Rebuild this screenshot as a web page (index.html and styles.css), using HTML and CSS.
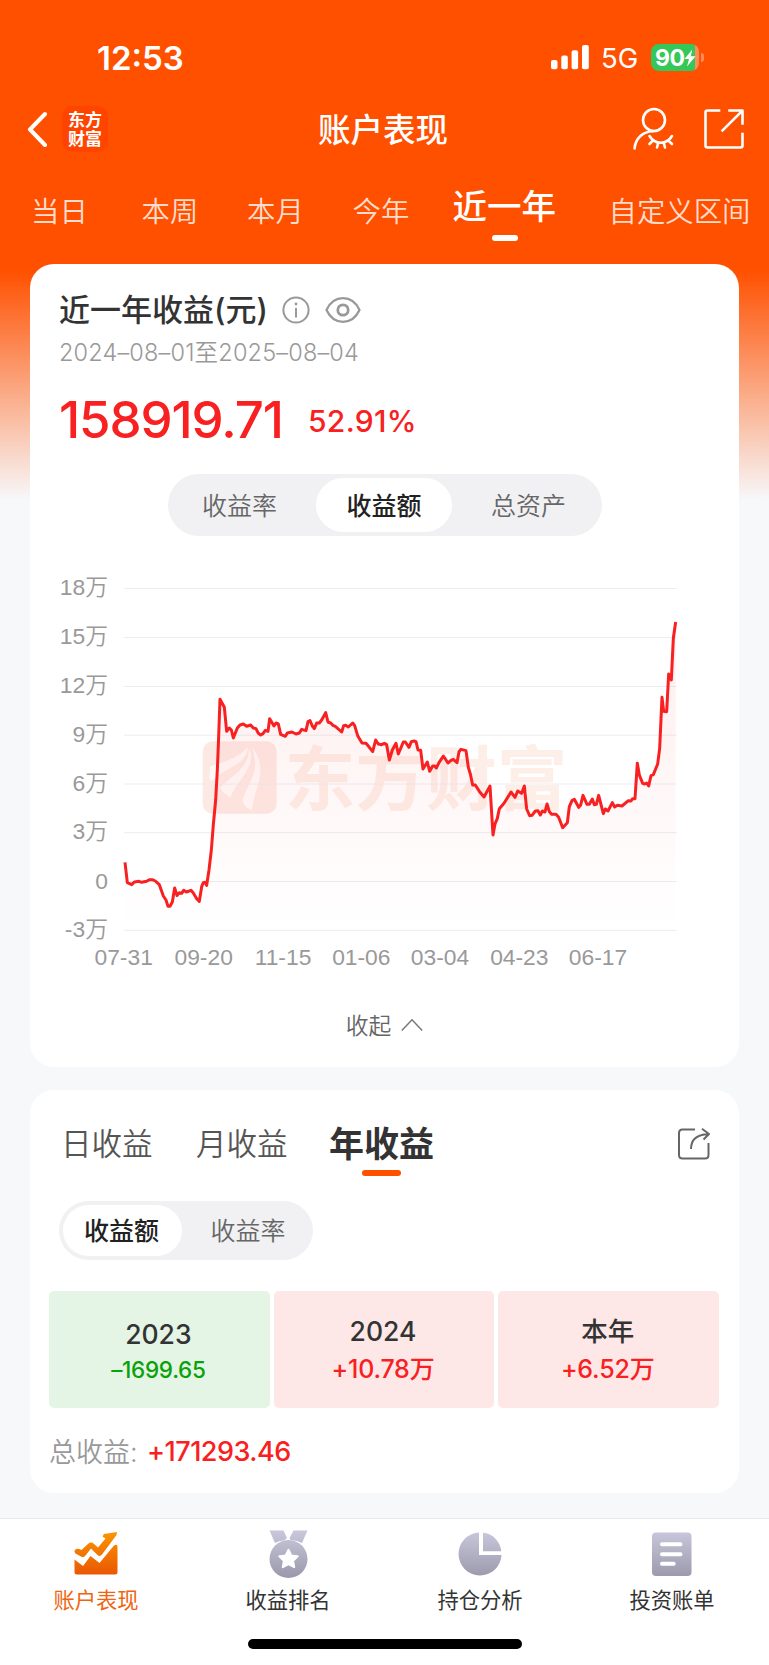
FILE: index.html
```html
<!DOCTYPE html>
<html lang="zh-CN">
<head>
    <meta charset="UTF-8">
    <meta name="viewport" content="width=device-width, initial-scale=1.0">
    <title>账户表现</title>
    <link rel="stylesheet" href="styles.css">
</head>
<body>

<div class="page">
    <!-- 状态栏 -->
    <div class="status-bar">
        <span class="time">12:53</span>
        <svg class="signal" width="38" height="25" viewBox="0 0 38 25" fill="#fff">
            <rect x="0" y="15" width="6.5" height="9.3" rx="2"/>
            <rect x="10.3" y="10.5" width="6.5" height="13.8" rx="2"/>
            <rect x="20.6" y="5.3" width="6.5" height="19" rx="2"/>
            <rect x="31" y="0" width="6.8" height="24.3" rx="2"/>
        </svg>
        <span class="network">5G</span>
        <div class="battery">
            <span class="battery-num">90</span>
            <svg class="bolt" width="12" height="18" viewBox="0 0 12 18" fill="#fff"><path d="M8.3 0.5 L0.5 10 H5 L3 17.5 L11.5 7.2 H6.8 Z"/></svg>
        </div>
        <div class="battery-cap"></div>
    </div>

    <!-- 标题栏 -->
    <div class="nav-bar">
        <svg class="back" width="21" height="36" viewBox="0 0 21 36" fill="none" stroke="#fff" stroke-width="4" stroke-linecap="round" stroke-linejoin="round"><path d="M18 3 L3 18.500 L18 34"/></svg>
        <div class="logo"><span>东方</span><span>财富</span></div>
        <h1 class="title">账户表现</h1>
        <svg class="icon-user" width="42" height="44" viewBox="0 0 42 44" fill="none" stroke="#fff" stroke-width="2.6" stroke-linecap="round">
            <circle cx="21" cy="13" r="11"/>
            <path d="M20 24.2 C9.500 24.5 2.500 31.500 1.500 41.500"/>
            <path d="M16.500 29 C22 38 33.500 38 39 29"/>
            <path d="M19.500 34 L16.500 37 M25.200 36.200 L24 40.500 M30.800 36.200 L32 40.500 M35.700 34 L39 37"/>
        </svg>
        <svg class="icon-open" width="40" height="40" viewBox="0 0 40 40" fill="none" stroke="#fff" stroke-width="2.6" stroke-linecap="square" stroke-linejoin="round">
            <path d="M15 1.500 H3.500 Q1.500 1.500 1.500 3.500 V36.500 Q1.500 38.500 3.500 38.500 H36.500 Q38.500 38.500 38.500 36.500 V25"/>
            <path d="M25.500 1.500 H38.500 V14.500 M38 2 L18.500 21.500"/>
        </svg>
    </div>

    <!-- 时间区间 -->
    <div class="range-tabs">
        <span>当日</span>
        <span>本周</span>
        <span>本月</span>
        <span>今年</span>
        <span class="active">近一年</span>
        <span>自定义区间</span>
    </div>

    <!-- 收益走势 -->
    <div class="card profit-card">
        <div class="profit-head">
            <h2>近一年收益(元)</h2>
            <svg class="icon-info" width="28" height="28" viewBox="0 0 28 28" fill="none" stroke="#999" stroke-width="2">
                <circle cx="14" cy="14" r="12.6"/>
                <path d="M14 12 V21.500"/>
                <circle cx="14" cy="8" r="1.400" fill="#999" stroke="none"/>
            </svg>
            <svg class="icon-eye" width="36" height="28" viewBox="0 0 36 28" fill="none" stroke="#999" stroke-width="2.300" stroke-linejoin="round">
                <path d="M1.500 14 C5 6.500 11 2.200 18 2.200 C25 2.200 31 6.500 34.500 14 C31 21.500 25 25.800 18 25.800 C11 25.800 5 21.500 1.500 14 Z"/>
                <circle cx="18" cy="14" r="5.200" stroke-width="2.800"/>
            </svg>
        </div>
        <div class="date-range">2024–08–01至2025–08–04</div>
        <div class="profit-value">
            <span class="amount">158919.71</span>
            <span class="rate">52.91%</span>
        </div>

        <div class="segment segment-three">
            <span>收益率</span>
            <span class="active">收益额</span>
            <span>总资产</span>
        </div>

        <svg class="chart" width="660" height="410" viewBox="0 0 1980 1230">
            <defs>
                <linearGradient id="area" x1="0" y1="156" x2="0" y2="1080" gradientUnits="userSpaceOnUse">
                    <stop offset="0" stop-color="#f82020" stop-opacity="0.08"/>
                    <stop offset="1" stop-color="#f82020" stop-opacity="0"/>
                </linearGradient>
            </defs>
            <!-- 水印 -->
            <g class="watermark">
                <rect x="488" y="514" width="222" height="217" rx="30"/>
                <path class="watermark-cut" d="M510 590 C555 575 600 560 624 530 C620 585 560 590 527 625 C515 635 508 632 508 620 Z"/>
                <path class="watermark-cut" d="M627 532 C650 590 600 620 570 683 C555 672 545 662 540 655 C565 620 630 600 627 532 Z"/>
                <path class="watermark-cut" d="M636 532 C690 600 640 660 636 720 C620 715 610 705 608 690 C620 640 665 610 636 532 Z"/>
                <text x="734" y="704" textLength="848">东方财富</text>
            </g>
            <g class="grid">
                <path d="M252 55.500 H1910 M252 202.500 H1910 M252 349.500 H1910 M252 495.500 H1910 M252 642 H1910 M252 788 H1910 M252 934.500 H1910 M252 1081 H1910"/>
            </g>
            <path id="fill" fill="url(#area)"/>
            <polyline id="line" class="line" points="255,877 262,938 275,944 283,936 297,934 305,937 320,934 328,929 337,929 346,933 358,944 370,978 378,990 384,1009 390,1009 397,996 404,954 411,977 418,968 425,970 431,961 439,966 453,961 460,969 470,986 478,994 485,950 490,938 495,937 500,946 507,900 514,840 520,764 527,690 532,600 536,500 540,388 553,412 560,484 568,474 574,480 580,504 592,474 600,465 610,462 620,469 632,465 640,474 648,476 655,490 662,495 669,491 676,481 684,484 689,446 702,468 708,459 715,462 722,493 736,499 742,489 756,486 768,492 778,489 785,478 798,482 804,455 810,452 817,468 823,476 830,459 838,459 845,450 857,428 864,456 872,459 880,467 886,469 905,486 911,467 917,466 925,471 938,459 944,467 953,497 966,519 978,520 988,532 998,545 1007,510 1015,522 1025,524 1033,520 1040,524 1048,570 1057,540 1068,520 1075,552 1090,516 1096,516 1107,532 1114,515 1122,513 1128,515 1134,540 1142,541 1149,597 1162,576 1169,604 1178,588 1184,588 1189,594 1197,578 1210,558 1224,579 1232,572 1240,568 1251,578 1257,545 1263,538 1278,542 1285,592 1291,612 1298,645 1306,645 1320,667 1332,681 1350,648 1359,795 1365,762 1372,745 1378,716 1392,700 1413,666 1425,682 1433,663 1445,670 1453,648 1460,717 1469,737 1476,736 1486,723 1494,722 1501,735 1507,723 1515,726 1521,702 1528,725 1535,733 1548,733 1556,742 1568,773 1582,758 1588,710 1596,692 1603,688 1616,712 1622,705 1629,676 1641,703 1648,703 1657,687 1663,704 1669,703 1676,676 1690,731 1696,717 1704,723 1717,698 1724,711 1732,706 1746,708 1765,692 1773,693 1778,686 1785,686 1792,580 1798,615 1808,640 1814,642 1820,639 1826,648 1833,617 1840,614 1853,582 1859,535 1866,382 1871,424 1880,425 1886,312 1894,330 1900,205 1907,156"/>
            <g class="axis-y">
                <text x="204" y="75">18万</text>
                <text x="204" y="222">15万</text>
                <text x="204" y="368">12万</text>
                <text x="204" y="515">9万</text>
                <text x="204" y="662">6万</text>
                <text x="204" y="808">3万</text>
                <text x="204" y="956">0</text>
                <text x="204" y="1102">-3万</text>
            </g>
            <g class="axis-x">
                <text x="251" y="1186">07-31</text>
                <text x="491" y="1186">09-20</text>
                <text x="729" y="1186">11-15</text>
                <text x="964" y="1186">01-06</text>
                <text x="1200" y="1186">03-04</text>
                <text x="1438" y="1186">04-23</text>
                <text x="1674" y="1186">06-17</text>
            </g>
        </svg>

        <div class="collapse">
            <span>收起</span>
            <svg width="22" height="14" viewBox="0 0 22 14" fill="none" stroke="#777" stroke-width="1.500"><path d="M0.800 12.500 L11 1.800 L21.200 12.500"/></svg>
        </div>
    </div>

    <!-- 收益日历 -->
    <div class="card calendar-card">
        <div class="period-tabs">
            <span>日收益</span>
            <span>月收益</span>
            <span class="active">年收益</span>
            <svg class="icon-share" width="34" height="34" viewBox="0 0 34 34" fill="none" stroke="#666" stroke-width="2" stroke-linejoin="round">
                <path d="M18 2.500 H5.500 Q2 2.500 2 6 V28 Q2 31.500 5.500 31.500 H28 Q31.500 31.500 31.500 28 V16"/>
                <path d="M14 22 C14 12.500 19.500 7.500 31 7.200 M25 1.800 L32 7 L26.500 12.500"/>
            </svg>
        </div>

        <div class="segment segment-two">
            <span class="active">收益额</span>
            <span>收益率</span>
        </div>

        <div class="years">
            <div class="year loss">
                <b>2023</b>
                <i>–1699.65</i>
            </div>
            <div class="year">
                <b>2024</b>
                <i>+10.78万</i>
            </div>
            <div class="year">
                <b>本年</b>
                <i>+6.52万</i>
            </div>
        </div>

        <div class="total"><span>总收益:</span><em>+171293.46</em></div>
    </div>

    <!-- 底部导航 -->
    <div class="tab-bar">
        <div class="tab-items">
            <div class="tab-item active">
                <svg width="48" height="48" viewBox="0 0 48 48">
                    <defs>
                        <linearGradient id="gray" x1="0" y1="2" x2="0" y2="46" gradientUnits="userSpaceOnUse">
                            <stop offset="0" stop-color="#c8c6da"/>
                            <stop offset="1" stop-color="#9c9aac"/>
                        </linearGradient>
                        <linearGradient id="rise" x1="0" y1="2" x2="0" y2="46" gradientUnits="userSpaceOnUse">
                            <stop offset="0" stop-color="#fa9600"/>
                            <stop offset="1" stop-color="#ea5504"/>
                        </linearGradient>
                    </defs>
                    <g fill="url(#rise)">
                        <path d="M45 2 L44.500 5 L30 24.500 Q28 27 25.500 25 L19 18.500 L13.500 25.500 Q11.500 28 9 26.500 L3.500 23.500 Q1.500 21 3.500 19.500 Q5.500 18 9.500 20 L16.500 13.500 Q19 11.500 21.500 13.500 L26 17.500 L33.500 8.500 L30.500 6.500 L32 4 Z"/>
                        <path d="M2.500 29.500 L11 36 L18.500 26 L27.500 33 L42 15.500 Q45.500 13.500 45.500 17 V42 Q45.500 44.500 43 44.500 H5 Q2.500 44.500 2.500 42 Z"/>
                    </g>
                </svg>
                <span>账户表现</span>
            </div>
            <div class="tab-item">
                <svg width="48" height="48" viewBox="0 0 48 48">
                    <path fill="url(#gray)" d="M5.500 0.500 H19.500 L23 8 L20.500 10.200 Q14.500 10.800 11 13 Z M29.500 0.500 H43.500 L38 13 Q33.500 10.500 26.500 10 L25.500 8 Z"/>
                    <circle fill="url(#gray)" cx="24.500" cy="29" r="19"/>
                    <path fill="#fff" stroke="#fff" stroke-width="2" stroke-linejoin="round" d="M24.500 19.800 L27.300 25.500 L33.700 26.300 L29.100 30.800 L30.200 37.200 L24.500 34.200 L18.800 37.200 L19.900 30.800 L15.300 26.300 L21.700 25.500 Z"/>
                </svg>
                <span>收益排名</span>
            </div>
            <div class="tab-item">
                <svg width="48" height="48" viewBox="0 0 48 48" fill="url(#gray)">
                    <path d="M23 2.500 V25 H45.500 A21.500 21.500 0 1 1 23 2.500 Z"/>
                    <path d="M27 2.800 A20 20 0 0 1 45.200 21.200 H27 Z"/>
                </svg>
                <span>持仓分析</span>
            </div>
            <div class="tab-item">
                <svg width="48" height="48" viewBox="0 0 48 48">
                    <rect fill="url(#gray)" x="4" y="2.500" width="39.500" height="43.500" rx="4"/>
                    <path stroke="#fff" stroke-width="4" stroke-linecap="round" d="M14 14.300 H32.500 M14 24.300 H32.500 M14 33.800 H25.700"/>
                </svg>
                <span>投资账单</span>
            </div>
        </div>
        <div class="home-indicator"></div>
    </div>
</div>

<script>
    // 折线下方的填充区域
    const points = document.getElementById('line').getAttribute('points');
    document.getElementById('fill').setAttribute('d', 'M' + points + ' 1907,1080 255,1080 Z');
</script>

</body>
</html>
```
FILE: styles.css
```css
* {
    box-sizing: border-box;
}

body {
    margin: 0;
    font-family: Inter, "Noto Sans CJK SC", sans-serif;
    color: #333;
    background-color: #f7f8fa;
}

h1, h2 {
    margin: 0;
    font-weight: 500;
}

svg {
    display: block;
    flex: none;
}

.page {
    width: 769px;
    height: 1665px;
    display: flex;
    flex-direction: column;
    background: linear-gradient(#ff5000 0, #ff5000 270px, #f7f8fa 500px);
    overflow: hidden;
    white-space: nowrap;
}

/* 状态栏 */
.status-bar {
    display: flex;
    align-items: center;
    height: 90px;
    padding: 25px 65px 0 97px;
    color: #fff;
}

.time {
    font-size: 33px;
    font-weight: 600;
}

.signal {
    margin-left: auto;
}

.network {
    margin-left: 12px;
    width: 50px;
    font-size: 27.500px;
}

.battery {
    display: flex;
    align-items: center;
    width: 48px;
    height: 27px;
    padding-left: 4px;
    border-radius: 8px;
    background: linear-gradient(90deg, #34c759 44px, #ff8a5a 44px);
}

.battery-num {
    font-size: 23px;
    font-weight: 700;
    letter-spacing: -0.5px;
}

.battery-cap {
    width: 3px;
    height: 9px;
    margin-left: 2px;
    border-radius: 0 3px 3px 0;
    background-color: #ff8a5a;
}

/* 标题栏 */
.nav-bar {
    display: flex;
    align-items: center;
    height: 78px;
    padding: 0 25px 0 27px;
    color: #fff;
}

.logo {
    display: flex;
    flex-direction: column;
    align-items: center;
    justify-content: center;
    width: 46px;
    height: 46px;
    margin-left: 14px;
    padding-top: 2px;
    border-radius: 10px;
    background-color: #ff4400;
    font-size: 17px;
    font-weight: 700;
    line-height: 19px;
}

.title {
    width: 132px;
    margin-left: 210px;
    padding-bottom: 4px;
    font-size: 32.500px;
}

.icon-user {
    margin-left: auto;
}

.icon-open {
    margin-left: 29px;
}

/* 时间区间 */
.range-tabs {
    display: grid;
    grid-template-columns: 110.500px 105.500px 105.500px 100px 156px auto;
    align-items: center;
    height: 96px;
    padding: 0 0 13px 31px;
    font-size: 28.400px;
    font-weight: 350;
    color: #ffdccb;
}

.range-tabs .active {
    position: relative;
    font-size: 34.500px;
    font-weight: 500;
    color: #fff;
    padding-bottom: 11px;
}

.range-tabs .active::after {
    content: "";
    position: absolute;
    left: 39px;
    bottom: -1px;
    width: 26px;
    height: 6px;
    border-radius: 3px;
    background-color: #fff;
}

.card {
    margin: 0 30px;
    border-radius: 24px;
    background-color: #fff;
}

/* 收益走势 */
.profit-card {
    height: 803px;
    padding-top: 23px;
}

.profit-head {
    display: flex;
    align-items: center;
    height: 46px;
    padding-left: 29px;
}

.profit-head h2 {
    width: 223px;
    padding-bottom: 6px;
    font-size: 31px;
}

.icon-eye {
    margin-left: 15px;
}

.date-range {
    height: 40px;
    padding-left: 29px;
    line-height: 40px;
    font-size: 23.500px;
    font-weight: 350;
    letter-spacing: 0.170px;
    color: #999;
}

.profit-value {
    display: flex;
    height: 101px;
    padding: 16px 0 0 29px;
    line-height: 62px;
    color: #f82020;
}

.amount {
    width: 249px;
    font-size: 51px;
    font-weight: 500;
    letter-spacing: -1.100px;
}

.rate {
    padding-top: 1px;
    font-size: 30px;
    font-weight: 500;
    letter-spacing: 0.300px;
}

.segment {
    display: flex;
    padding: 4px;
    background-color: #f1f1f3;
    font-size: 25px;
    font-weight: 350;
    color: #666;
}

.segment span {
    display: flex;
    align-items: center;
    justify-content: center;
    flex: 1;
    padding-bottom: 3px;
    border-radius: 28px;
}

.segment .active {
    background-color: #fff;
    font-weight: 500;
    color: #222;
}

.segment-three {
    width: 434px;
    height: 62px;
    margin-left: 138px;
    border-radius: 31px;
}

.segment-three .active {
    flex: 0 0 136px;
}

.segment-three span:first-child {
    flex: 0 0 144px;
    padding-right: 9px;
}

.segment-three span:last-child {
    padding-left: 7px;
}

.chart {
    margin: 34px 0 0 10px;
}

.grid {
    stroke: #ececf2;
    stroke-width: 3;
}

.line {
    fill: none;
    stroke: #f82020;
    stroke-width: 9;
    stroke-linejoin: round;
}

.axis-x,
.axis-y {
    font-family: "Liberation Sans", "Noto Sans CJK SC", sans-serif;
    font-size: 68.500px;
    font-weight: 350;
    fill: #999;
}

.axis-y {
    text-anchor: end;
}

.axis-x {
    text-anchor: middle;
}

.watermark {
    fill: #fde9e4;
    font-size: 212px;
    font-weight: 700;
}

.watermark text {
    fill: #fdeee7;
}

.watermark-cut {
    fill: #fff9f8;
}

.collapse {
    display: flex;
    align-items: center;
    justify-content: center;
    gap: 10px;
    height: 89px;
    font-size: 22.800px;
    font-weight: 350;
    color: #666;
}

/* 收益日历 */
.calendar-card {
    height: 403px;
    margin-top: 23px;
    margin-bottom: 25px;
    padding-top: 24px;
}

.period-tabs {
    display: grid;
    grid-template-columns: 135px 133px 348px auto;
    align-items: center;
    height: 60px;
    padding-left: 31px;
    font-size: 30.500px;
    font-weight: 350;
    color: #555;
}

.period-tabs span {
    padding-bottom: 5px;
}

.period-tabs .active {
    position: relative;
    font-size: 35px;
    font-weight: 700;
    color: #333;
}

.period-tabs .active::after {
    content: "";
    position: absolute;
    left: 33px;
    bottom: -4px;
    width: 39px;
    height: 6px;
    border-radius: 3px;
    background-color: #ff5000;
}

.segment-two {
    width: 254px;
    height: 59px;
    margin: 27px 0 0 29px;
    border-radius: 30px;
}

.segment-two .active {
    flex: 0 0 119px;
    padding-right: 2px;
}

.segment-two span:last-child {
    padding-left: 5px;
}

.years {
    display: grid;
    grid-template-columns: 1fr 1fr 1fr;
    gap: 4px;
    margin: 31px 20px 0 19px;
}

.year {
    display: flex;
    flex-direction: column;
    align-items: center;
    height: 117px;
    padding: 21px 2px 0 0;
    border-radius: 5px;
    background-color: #fde7e7;
    color: #f82020;
}

.year b {
    height: 38px;
    line-height: 38px;
    font-size: 26.500px;
    font-weight: 500;
    color: #333;
}

.year i {
    height: 38px;
    line-height: 38px;
    font-size: 25px;
    font-style: normal;
    font-weight: 500;
    letter-spacing: -0.200px;
}

.loss {
    padding-top: 24px;
    background-color: #e4f4e5;
    color: #0aa20a;
}

.loss i {
    line-height: 33px;
    font-size: 22.500px;
    letter-spacing: -0.300px;
}

.total {
    display: flex;
    align-items: center;
    height: 85px;
    padding-left: 19px;
    font-size: 27px;
}

.total span {
    width: 98px;
    font-weight: 350;
    color: #999;
}

.total em {
    padding-top: 2px;
    font-style: normal;
    font-weight: 500;
    letter-spacing: -0.500px;
    color: #f82020;
}

/* 底部导航 */
.tab-bar {
    flex: 1;
    border-top: 1px solid #e9e9ed;
    background-color: #fff;
}

.tab-items {
    display: grid;
    grid-template-columns: repeat(4, 1fr);
    height: 120px;
    padding: 11px 1px 0 0;
}

.tab-item {
    display: flex;
    flex-direction: column;
    align-items: center;
    font-size: 21.300px;
    line-height: 32px;
}

.tab-item span {
    margin-top: 6px;
}

.tab-item.active {
    color: #f0640f;
}

.home-indicator {
    width: 274px;
    height: 10px;
    margin: 0 auto;
    border-radius: 5px;
    background-color: #000;
}
```
